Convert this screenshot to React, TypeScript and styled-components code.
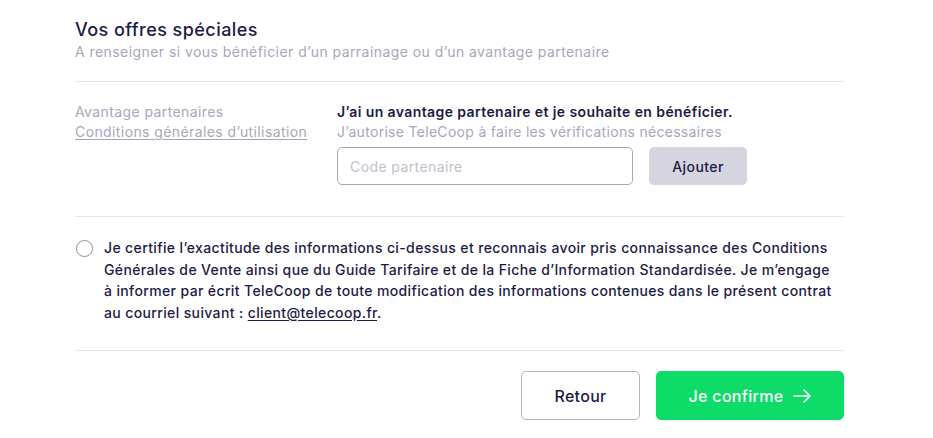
import React from 'react'
import styled, { createGlobalStyle } from 'styled-components'

const GlobalStyle = createGlobalStyle`
  body {
    margin: 0;
    background: #fff;
    font-family: Inter, 'Noto Sans', sans-serif;
    color: #1d1b45;
  }
`

const Page = styled.div`
  width: 769px;
  padding: 18px 0 0 75px;
`

const Title = styled.h2`
  margin: 0;
  font-size: 18px;
  line-height: 24px;
  font-weight: 500;
  letter-spacing: 0.45px;
  color: #1d1b45;
`

const Subtitle = styled.p`
  margin: 0;
  font-size: 14px;
  line-height: 20px;
  letter-spacing: 0.44px;
  color: #a9a7bb;
`

const Divider = styled.hr`
  margin: ${(p) => p.$gap || '0'};
  border: none;
  border-top: 1px solid #e6e5ea;
`

const OfferRow = styled.div`
  display: flex;
  padding: 20px 0 31px;
  letter-spacing: 0.4px;
`

const SideCol = styled.div`
  width: 262px;
  display: flex;
  flex-direction: column;
  font-size: 14px;
  line-height: 20px;
  color: #a9a7bb;
`

const SideLink = styled.a`
  color: #a9a7bb;
  text-decoration: underline;
  text-underline-offset: 2px;
`

const MainCol = styled.div`
  display: flex;
  flex-direction: column;
  font-size: 14px;
  line-height: 20px;
`

const Strong = styled.span`
  font-weight: 600;
  color: #1d1b45;
`

const Hint = styled.span`
  color: #a9a7bb;
  letter-spacing: 0.3px;
`

const InputRow = styled.div`
  display: flex;
  gap: 16px;
  margin-top: 5px;
`

const CodeInput = styled.input`
  box-sizing: border-box;
  width: 296px;
  height: 38px;
  padding: 0 12px;
  border: 1px solid #a9a8b6;
  border-radius: 5px;
  font-family: inherit;
  font-size: 14px;
  letter-spacing: 0.4px;
  color: #1d1b45;
  &::placeholder { color: #c2c0cd; }
`

const SmallButton = styled.button`
  width: 98px;
  height: 38px;
  border: none;
  border-radius: 5px;
  background: #d5d4df;
  font-family: inherit;
  font-size: 14px;
  font-weight: 500;
  letter-spacing: 0.4px;
  color: #1d1b45;
`

const CertifyRow = styled.label`
  display: flex;
  gap: 11px;
  padding: 20px 0 27px;
  font-size: 14px;
  line-height: 21.5px;
  font-weight: 500;
  letter-spacing: 0.37px;
  color: #1d1b45;
`

const Radio = styled.span`
  flex: none;
  width: 15px;
  height: 15px;
  margin: 3px 0 0 1px;
  border: 1px solid #8e8c9c;
  border-radius: 50%;
`

const Mail = styled.a`
  color: #1d1b45;
  text-decoration: underline;
  text-underline-offset: 2px;
`

const Actions = styled.div`
  display: flex;
  justify-content: flex-end;
  gap: 16px;
  padding-top: 20px;
`

const ActionButton = styled.button`
  height: 49px;
  width: ${(p) => p.$width};
  border-radius: 5px;
  border: 1px solid ${(p) => (p.$primary ? '#0edc68' : '#b5b4bf')};
  background: ${(p) => (p.$primary ? '#0edc68' : '#fff')};
  color: ${(p) => (p.$primary ? '#fff' : '#1d1b45')};
  font-family: inherit;
  font-size: 16px;
  font-weight: 500;
  letter-spacing: 0.3px;
  display: flex;
  align-items: center;
  justify-content: center;
  gap: 10px;
`

export default function App () {
  return (
    <>
      <GlobalStyle />
      <Page>
        <Title>Vos offres spéciales</Title>
        <Subtitle>A renseigner si vous bénéficier d’un parrainage ou d’un avantage partenaire</Subtitle>
        <Divider $gap='19px 0 0' />
        <OfferRow>
          <SideCol>
            <span>Avantage partenaires</span>
            <SideLink href='#'>Conditions générales d’utilisation</SideLink>
          </SideCol>
          <MainCol>
            <Strong>J’ai un avantage partenaire et je souhaite en bénéficier.</Strong>
            <Hint>J’autorise TeleCoop à faire les vérifications nécessaires</Hint>
            <InputRow>
              <CodeInput placeholder='Code partenaire' />
              <SmallButton>Ajouter</SmallButton>
            </InputRow>
          </MainCol>
        </OfferRow>
        <Divider />
        <CertifyRow>
          <Radio />
          <span>
            Je certifie l’exactitude des informations ci-dessus et reconnais avoir pris connaissance des Conditions<br />
            Générales de Vente ainsi que du Guide Tarifaire et de la Fiche d’Information Standardisée. Je m’engage<br />
            à informer par écrit TeleCoop de toute modification des informations contenues dans le présent contrat<br />
            au courriel suivant : <Mail href='#'>client@telecoop.fr</Mail>.
          </span>
        </CertifyRow>
        <Divider />
        <Actions>
          <ActionButton $width='119px'>Retour</ActionButton>
          <ActionButton $primary $width='188px'>
            Je confirme
            <svg width='18' height='14' viewBox='0 0 18 14' fill='none' stroke='#fff' strokeWidth='1.6' strokeLinecap='round' strokeLinejoin='round'>
              <path d='M1 7h16M11 1l6 6-6 6' />
            </svg>
          </ActionButton>
        </Actions>
      </Page>
    </>
  )
}
